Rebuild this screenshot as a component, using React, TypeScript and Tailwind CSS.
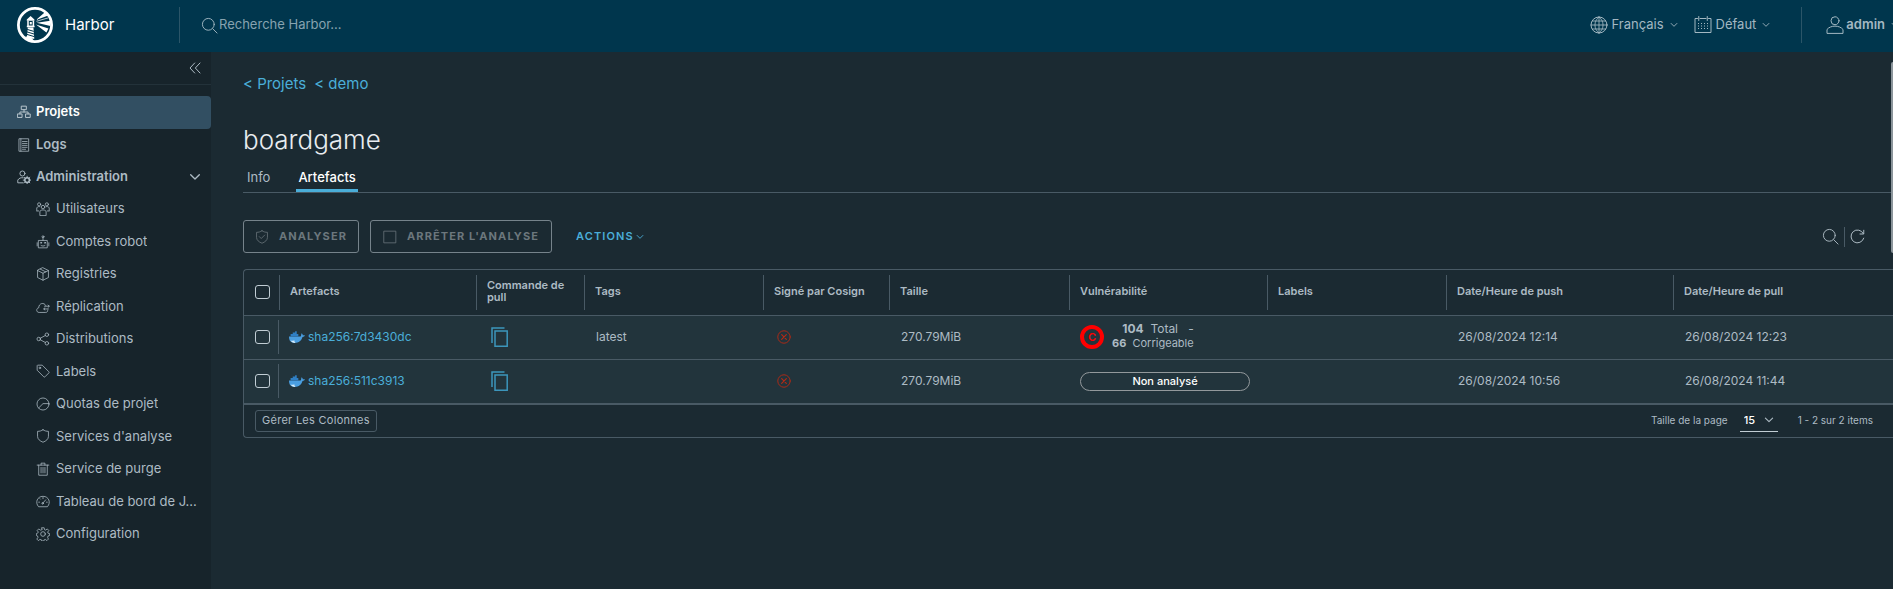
import React from "react";

type IconProps = { className?: string; children?: React.ReactNode };

function Icon({ className = "size-4", children }: IconProps) {
  return (
    <svg viewBox="0 0 36 36" className={`shrink-0 ${className}`} fill="none" stroke="currentColor" strokeWidth="2" strokeLinejoin="round" strokeLinecap="round" aria-hidden="true">
      {children}
    </svg>
  );
}

function Chevron({ className = "size-2.5" }: IconProps) {
  return (
    <Icon className={className}>
      <path d="M5 11l13 13 13-13" strokeWidth="4" />
    </Icon>
  );
}

function SearchIcon({ className = "size-4" }: IconProps) {
  return (
    <Icon className={className}>
      <circle cx="15.5" cy="15.5" r="12.5" />
      <path d="M25 25l9 9" />
    </Icon>
  );
}

function HarborLogo() {
  return (
    <svg viewBox="0 0 36 36" className="size-9 shrink-0" aria-hidden="true">
      <circle cx="18" cy="18" r="16.6" fill="none" stroke="#fff" strokeWidth="2.8" />
      <path d="M13.6 9l3.8 3.600H9.800z M9.800 12.400h7.600v1.400H9.800z" fill="#fff" />
      <path d="M11 13.800v5.400h5.400v-5.400M9.800 19.400h7.800" fill="none" stroke="#fff" strokeWidth="1.500" />
      <path d="M12.800 15h2v2.400h-2z" fill="#fff" />
      <path d="M10.800 20.400h5.600l.9 11.400H9.800z" fill="#fff" />
      <path d="M10.200 22.400l6.600 2M10 24.900l7.200 2.200M10 27.400l7.200 2.200" stroke="#00364d" strokeWidth="1" />
      <path d="M8.400 29.400c3 0 6 .6 8.600 4.400l-2 .4c-3-.4-5.200-2-6.600-4.800z" fill="#fff" />
      <path d="M19 13l8.600-7.400 3 3.200z M19.600 15.700l13.800-2v5.200z M19 17.400l12.400 4.200-2 3.800z" fill="#fff" />
      <path d="M19.400 14.300l11.800-3.400" stroke="#fff" strokeWidth=".7" />
    </svg>
  );
}

function DockerWhale() {
  return (
    <svg viewBox="0 0 30 22" className="h-3 w-4 shrink-0" aria-hidden="true">
      <path d="M0 10h20.500c1.500 0 2.500-.8 2.300-3.400L23.600 4c1.700 1 2.200 2.200 2.200 3.700 1.400-.3 3-.1 4.200.7-.8 1.600-2.400 2.400-4.700 2.400C23.400 17.500 18.500 22 10.500 22 3.500 22 0 18 0 10z" fill="#4a9ee0" />
      <path d="M3 5.500h14.500V10H3z M7 2.500h7.500v3H7z M11.500 0h3v3h-3z" fill="#2f7fc4" />
      <path d="M3 17.500c2 1 4.500 1 7-.5 0 2.500 1 4 3 5-5 .5-8-1-10-4.500z" fill="#d6ecfa" />
    </svg>
  );
}

const icons = {
  projects: <path d="M12 3h12v9H12z M2 23h11v9H2z M23 23h11v9H23z M18 12v6M7.500 23v-5h21v5" strokeWidth="2.400" />,
  logs: <path d="M6 2h24v32H6z M10 2v32M14 9h12M14 14h12M14 19h12M14 24h12M14 29h8" />,
  admin: (
    <>
      <circle cx="14" cy="9" r="6.500" strokeWidth="2.400" />
      <path d="M16 33H2v-7c3-5 8-7 14-6" strokeWidth="2.400" />
      <circle cx="26" cy="26" r="6" strokeWidth="4" />
      <path d="M26 16v4M26 32v4M16 26h4M32 26h4M19 19l3 3M30 30l3 3M33 19l-3 3M22 30l-3 3" strokeWidth="2.400" />
    </>
  ),
  users: (
    <>
      <circle cx="18" cy="13" r="4.500" />
      <circle cx="8" cy="6" r="4" />
      <circle cx="28" cy="6" r="4" />
      <path d="M10 34V24c3-5 13-5 16 0v10z M2 23v-8c2-3 5-4 8-3M34 23v-8c-2-3-5-4-8-3M3 23h4M29 23h4" />
    </>
  ),
  robot: (
    <>
      <path d="M7 14h22v19H7z M18 14V7M3 20v8M33 20v8M13 27c3 2 7 2 10 0" />
      <circle cx="18" cy="4.500" r="2.500" />
      <circle cx="13" cy="20" r="1.500" />
      <circle cx="23" cy="20" r="1.500" />
    </>
  ),
  cube: <path d="M18 2l14 7v18l-14 7-14-7V9z M4 9l14 7 14-7M18 16v18M11 5.500l14 7" />,
  cloud: <path d="M30 26v1c0 3-2 5-5 5H8c-8 0-8-11-1-12 0-12 14-15 18-6M22 16h12M31 13l3 3-3 3M32 23H20M23 20l-3 3 3 3" />,
  share: (
    <>
      <circle cx="7" cy="18" r="4.500" />
      <circle cx="28" cy="7" r="4.500" />
      <circle cx="28" cy="29" r="4.500" />
      <path d="M11 16l13-7M11 20l13 7" />
    </>
  ),
  tag: (
    <>
      <path d="M3 5v11l17 17c1 1 2 1 3 0l10-10c1-1 1-2 0-3L16 3H5z" />
      <circle cx="10" cy="10" r="2" />
    </>
  ),
  quota: (
    <>
      <circle cx="18" cy="18" r="15.500" />
      <path d="M33 17H18L7 28" />
    </>
  ),
  shield: <path d="M18 2c4 3 9 4 14 4v13c0 7-6 12-14 15C10 31 4 26 4 19V6c5 0 10-1 14-4z" />,
  trash: <path d="M3 8h30M7 8v26h22V8M13 8V3h10v5M13 14v14M18 14v14M23 14v14" />,
  gauge: (
    <>
      <path d="M6 32C-3 22 3 6 18 6s21 16 12 26z M18 9v3M7 21h2M27 21h2M10 12l1 1M18 23l7-8" />
      <circle cx="17" cy="24" r="2" />
    </>
  ),
  gear: (
    <>
      <path d="M15 2h6l1 5 3 1 4-3 4 4-3 4 1 3 4 1v5l-4 1-1 4 2 4-4 4-4-3-3 1-1 3h-5l-1-3-4-1-4 3-4-4 3-4-1-4-3-1v-5l3-1 2-3-3-4 4-4 4 3 4-1z" />
      <circle cx="18" cy="18" r="6" />
    </>
  ),
};

const adminItems: { label: string; icon: keyof typeof icons }[] = [
  { label: "Utilisateurs", icon: "users" },
  { label: "Comptes robot", icon: "robot" },
  { label: "Registries", icon: "cube" },
  { label: "Réplication", icon: "cloud" },
  { label: "Distributions", icon: "share" },
  { label: "Labels", icon: "tag" },
  { label: "Quotas de projet", icon: "quota" },
  { label: "Services d'analyse", icon: "shield" },
  { label: "Service de purge", icon: "trash" },
  { label: "Tableau de bord de J...", icon: "gauge" },
  { label: "Configuration", icon: "gear" },
];

const columns = [
  { label: "Artefacts", width: "w-[197px]" },
  { label: "Commande de pull", width: "w-[108px]" },
  { label: "Tags", width: "w-[179px]" },
  { label: "Signé par Cosign", width: "w-[126px]" },
  { label: "Taille", width: "w-[180px]" },
  { label: "Vulnérabilité", width: "w-[198px]" },
  { label: "Labels", width: "w-[179px]" },
  { label: "Date/Heure de push", width: "w-[227px]" },
  { label: "Date/Heure de pull", width: "" },
];

const rows = [
  { digest: "sha256:7d3430dc", tag: "latest", size: "270.79MiB", scanned: true, push: "26/08/2024 12:14", pull: "26/08/2024 12:23" },
  { digest: "sha256:511c3913", tag: "", size: "270.79MiB", scanned: false, push: "26/08/2024 10:56", pull: "26/08/2024 11:44" },
];

function Checkbox({ label }: { label: string }) {
  return (
    <input type="checkbox" aria-label={label} className="block h-3.5 w-[15px] appearance-none rounded-[3px] border border-[#c1cdd4] checked:bg-[#4aaed9]" />
  );
}

function Header() {
  return (
    <header className="flex h-[52px] shrink-0 items-center overflow-hidden bg-[#00364d] pb-0.5 text-[13px] text-[#a3b8c2]">
      <a href="#" className="flex w-[179px] shrink-0 items-center gap-3 pl-[17px] text-[15px] text-white">
        <HarborLogo />
        Harbor
      </a>
      <div className="h-9 w-px bg-[#2b5568]" />
      <label className="flex flex-1 items-center pl-[21px]">
        <SearchIcon className="size-[17px]" />
        <input type="search" aria-label="Recherche" placeholder="Recherche Harbor..." className="w-60 bg-transparent pl-px outline-none placeholder:text-[#87a3b0]" />
      </label>
      <button className="flex items-center gap-1 whitespace-nowrap">
        <Icon className="size-[18px]">
          <circle cx="18" cy="18" r="16" />
          <path d="M18 2v32M2 18h32M18 2c-11 8-11 24 0 32M18 2c11 8 11 24 0 32M5 10h26M5 26h26" strokeWidth="1.700" />
        </Icon>
        Français
        <Chevron className="ml-0.5 size-2" />
      </button>
      <button className="ml-4 flex items-center gap-1 whitespace-nowrap">
        <Icon className="size-[18px]">
          <path d="M7 5H2v28h32V5h-5M12 5h12M9.500 1v8M26.500 1v8" />
          <path d="M8 15h21M8 20h21M8 25h21" strokeDasharray="2 4" strokeLinecap="butt" />
        </Icon>
        Défaut
        <Chevron className="ml-0.5 size-2" />
      </button>
      <div className="ml-[31px] h-9 w-px bg-[#2b5568]" />
      <button className="-mr-1.5 ml-6 flex items-center gap-0.5 font-semibold">
        <Icon className="size-[18px]">
          <circle cx="18" cy="9.500" r="8" />
          <path d="M2 34v-7c7-9 25-9 32 0v7z" />
        </Icon>
        admin
        <Chevron className="ml-1 size-2" />
      </button>
    </header>
  );
}

function Sidebar() {
  return (
    <nav aria-label="Navigation" className="flex w-[211px] shrink-0 flex-col bg-[#17242b] text-[13px] text-[#adbbc4]">
      <div className="flex h-[33px] items-center justify-end border-b border-[#23323a] pr-2.5">
        <button aria-label="Réduire">
          <Icon className="size-3">
            <path d="M17 3L3 18l14 15M33 3L19 18l14 15" strokeWidth="3" />
          </Icon>
        </button>
      </div>
      <a href="#" className="mt-[11px] flex h-[33px] items-center gap-[5px] rounded-r bg-[#324f62] pb-px pl-[17px] font-semibold text-white">
        <Icon className="size-3.5 text-[#c1cdd4]">{icons.projects}</Icon>
        Projets
      </a>
      <a href="#" className="flex h-8 items-center gap-[5px] pl-[17px] font-semibold">
        <Icon className="size-3.5">{icons.logs}</Icon>
        Logs
      </a>
      <button className="flex h-8 items-center gap-[5px] pr-2.5 pl-[17px] font-semibold">
        <Icon className="size-3.5">{icons.admin}</Icon>
        <span className="flex-1 text-left">Administration</span>
        <Chevron className="size-3" />
      </button>
      <ul className="grid min-h-[357px] auto-rows-fr grid-cols-1">
        {adminItems.map((item) => (
          <li key={item.label} className="flex min-w-0 items-center">
            <a href="#" className="flex min-w-0 flex-1 items-center gap-1.5 pr-2 pl-9">
              <Icon className="size-3.5">{icons[item.icon]}</Icon>
              <span className="truncate">{item.label}</span>
            </a>
          </li>
        ))}
      </ul>
    </nav>
  );
}

function Vulnerability({ scanned }: { scanned: boolean }) {
  if (!scanned) {
    return <div className="mr-[17px] h-[19px] rounded-full border border-[#93999c] text-center text-[11px] leading-4 font-medium text-white">Non analysé</div>;
  }
  return (
    <div className="flex items-center gap-2">
      <span className="flex size-6 items-center justify-center rounded-full border-4 border-[#ff0000] text-[11px] font-semibold text-[#ff0000]">C</span>
      <div className="flex flex-col pb-0.5 text-right leading-[15px]">
        <span className="text-[12px]"><b>104</b>&nbsp; Total &nbsp; -</span>
        <span className="text-[11px]"><b>66</b>&nbsp; Corrigeable</span>
      </div>
    </div>
  );
}

function ArtifactsTable() {
  return (
    <div className="mt-4 overflow-hidden rounded-l border-y border-l border-[#495a65]">
      <table className="w-full table-fixed border-collapse text-left">
        <thead>
          <tr className="h-[45px] border-b border-[#495a65] text-[11px] leading-3">
            <th className="w-[35px] pl-[11px]"><Checkbox label="Tout sélectionner" /></th>
            {columns.map((c) => (
              <th key={c.label} className={`font-semibold ${c.width}`}>
                <div className="flex h-[35px] items-center border-l border-[#495a65] pr-2 pb-0.5 pl-2.5">{c.label}</div>
              </th>
            ))}
          </tr>
        </thead>
        <tbody className="text-[12px]">
          {rows.map((r) => (
            <tr key={r.digest} className="h-11 border-b border-[#495a65] bg-[#22343c]">
              <td className="pl-[11px]">
                <div className="flex h-[34px] items-center border-r border-[#495a65]"><Checkbox label={r.digest} /></div>
              </td>
              <td className="pl-2.5">
                <a href="#" className="flex items-center gap-[3px] text-[#4aaed9]"><DockerWhale />{r.digest}</a>
              </td>
              <td className="pl-[15px]">
                <button aria-label="Copier la commande" className="block text-[#3c96bc]">
                  <svg viewBox="0 0 17 20" className="h-5 w-[17px]" fill="none" stroke="currentColor" strokeWidth="1.500" aria-hidden="true">
                    <path d="M1 16V1h12.500M4 4h12.200v15.200H4z" />
                  </svg>
                </button>
              </td>
              <td className="pl-3">{r.tag}</td>
              <td className="pl-3.5">
                <Icon className="size-3.5 text-[#b32a15]">
                  <circle cx="18" cy="18" r="16" strokeWidth="2.400" />
                  <path d="M12 12l12 12M24 12L12 24" strokeWidth="3" />
                </Icon>
              </td>
              <td className="pl-3">{r.size}</td>
              <td className="pl-[11px]"><Vulnerability scanned={r.scanned} /></td>
              <td />
              <td className="pl-3">{r.push}</td>
              <td className="pl-3">{r.pull}</td>
            </tr>
          ))}
        </tbody>
      </table>
      <div className="flex h-[33px] items-center border-t border-[#495a65] pr-5 pl-[11px] text-[10px]">
        <button className="h-[22px] rounded-[3px] border border-[#495a65] px-1.5 text-[11px] tracking-wide">Gérer Les Colonnes</button>
        <label htmlFor="page-size" className="mr-3 ml-auto">Taille de la page</label>
        <div className="relative mr-5 border-b border-[#c1cdd4]">
          <select id="page-size" className="block h-[22px] w-[38px] appearance-none pl-1 text-[11px] font-medium text-white outline-none">
            <option>15</option>
          </select>
          <Chevron className="pointer-events-none absolute top-1.5 right-1 size-2.5" />
        </div>
        <span>1 - 2 sur 2 items</span>
      </div>
    </div>
  );
}

export default function App() {
  return (
    <div className="flex h-screen flex-col overflow-hidden bg-[#1b2a32] font-['Inter',sans-serif] text-[#adbbc4]">
      <Header />
      <div className="flex min-h-0 flex-1">
        <Sidebar />
        <main className="relative min-w-0 flex-1 pt-5 pl-8">
          <div className="flex h-6 items-center gap-2 text-[15px] text-[#4aaed9]">
            <a href="#">&lt; Projets</a>
            <a href="#">&lt; demo</a>
          </div>
          <h1 className="mt-[26px] text-[26px] leading-9 font-light text-[#e9edf0]">boardgame</h1>
          <div role="tablist" className="flex h-[35px] items-stretch gap-[22px] border-b border-[#495a65] text-[13px]">
            <button role="tab" aria-selected="false" className="px-1 pt-1.5">Info</button>
            <button role="tab" aria-selected="true" className="border-b-[3px] border-[#4aaed9] px-0.5 pt-2 font-medium text-white">Artefacts</button>
          </div>
          <div className="mt-[27px] flex items-center text-[11px] font-bold tracking-widest">
            <button disabled className="flex h-[33px] items-center gap-2.5 rounded-[3px] border border-[#76838b] px-[11px] text-[#6c777d]">
              <Icon className="size-3.5">
                {icons.shield}
                <path d="M11 17l5 5 9-9" />
              </Icon>
              ANALYSER
            </button>
            <button disabled className="ml-[11px] flex h-[33px] items-center gap-2.5 rounded-[3px] border border-[#76838b] px-3 text-[#6c777d]">
              <Icon className="size-3.5"><path d="M3 3h30v30H3z" /></Icon>
              ARRÊTER L'ANALYSE
            </button>
            <button className="ml-6 flex items-center gap-0.5 font-semibold text-[#4aaed9]">
              ACTIONS
              <Chevron className="size-2" />
            </button>
            <button aria-label="Rechercher" className="ml-auto"><SearchIcon className="size-[17px]" /></button>
            <div className="mx-[5px] h-5 w-px bg-[#495a65]" />
            <button aria-label="Actualiser" className="mr-7">
              <Icon className="size-[15px]">
                <path d="M32 11A15.500 15.500 0 1 0 33 22M33 3v9h-9" strokeWidth="2.400" />
              </Icon>
            </button>
          </div>
          <ArtifactsTable />
          <div className="absolute top-2.5 right-0 h-[191px] w-0.5 rounded-l bg-[#8b959b]" />
        </main>
      </div>
    </div>
  );
}
